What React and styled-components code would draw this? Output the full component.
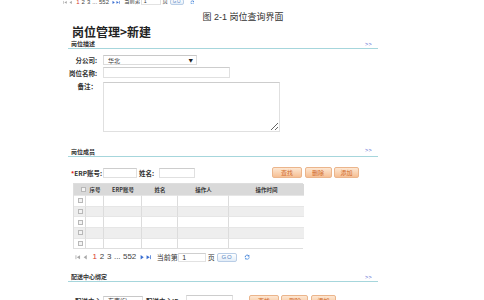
import React from 'react';
import styled, { createGlobalStyle } from 'styled-components';

const GlobalStyle = createGlobalStyle`
  html, body { margin: 0; padding: 0; background: #fff; }
  body {
    font-family: "Liberation Sans", "Noto Sans CJK SC", sans-serif;
    color: #333;
    width: 484px;
    height: 300px;
    overflow: hidden;
  }
  * { box-sizing: border-box; }
`;

const Page = styled.div`
  display: flex;
  flex-direction: column;
  width: 484px;
`;

/* ---------- pager ---------- */
const PagerBar = styled.div`
  display: flex;
  align-items: center;
  height: ${p => p.$h}px;
  font-size: ${p => p.$fs}px;
  margin-left: ${p => p.$ml}px;
  margin-top: ${p => p.$mt || 0}px;
  color: #444;
  white-space: nowrap;
  line-height: 1;
`;
const NavIcon = styled.svg`
  width: ${p => p.$w}em;
  height: 0.8em;
  margin-left: ${p => p.$ml || 0}em;
  fill: ${p => p.$c};
  flex: none;
`;
const PageNum = styled.span`
  margin-left: ${p => p.$ml}em;
  color: ${p => (p.$active ? '#d83a2e' : '#444')};
`;
const PagerText = styled.span`
  font-size: 0.875em;
  margin-left: ${p => p.$ml}em;
  color: #333;
`;
const PageInput = styled.span`
  display: inline-flex;
  align-items: center;
  width: 3.9em;
  height: 1.2em;
  margin-left: 0.1em;
  padding-left: 0.4em;
  border: 1px solid #e2e2e2;
  border-top-color: #cfcfcf;
  font-size: 0.875em;
  color: #333;
`;
const GoButton = styled.span`
  display: inline-flex;
  align-items: center;
  justify-content: center;
  width: 3.3em;
  height: 1.4em;
  margin-left: 0.4em;
  border: 1px solid #b9cde6;
  border-radius: 2px;
  background: linear-gradient(#ffffff, #e3edf8);
  color: #5a86c2;
  font-size: 0.75em;
  letter-spacing: 0.15em;
`;
const RefreshIcon = styled.svg`
  width: 0.8em;
  height: 0.8em;
  margin-left: 0.85em;
  flex: none;
`;

const Pager = ({ fs, h, ml, mt }) => (
  <PagerBar $fs={fs} $h={h} $ml={ml} $mt={mt}>
    <NavIcon $c="#a8a8a8" $w={0.7} viewBox="0 0 10 10">
      <rect x="1" y="1.5" width="1.4" height="7" />
      <path d="M9 1.5 L3.2 5 L9 8.5Z" />
    </NavIcon>
    <NavIcon $c="#a8a8a8" $w={0.55} $ml={0.3} viewBox="0 0 7 10">
      <path d="M6 1.5 L1 5 L6 8.5Z" />
    </NavIcon>
    <PageNum $active $ml={0.65}>1</PageNum>
    <PageNum $ml={0.35}>2</PageNum>
    <PageNum $ml={0.35}>3</PageNum>
    <PageNum $ml={0.3}>...</PageNum>
    <PageNum $ml={0.3}>552</PageNum>
    <NavIcon $c="#3b6fd1" $w={0.55} $ml={0.45} viewBox="0 0 7 10">
      <path d="M1 1.5 L6 5 L1 8.5Z" />
    </NavIcon>
    <NavIcon $c="#3b6fd1" $w={0.7} $ml={0.15} viewBox="0 0 10 10">
      <path d="M1 1.5 L6.8 5 L1 8.5Z" />
      <rect x="7.6" y="1.5" width="1.4" height="7" />
    </NavIcon>
    <PagerText $ml={0.8}>当前第</PagerText>
    <PageInput>1</PageInput>
    <PagerText $ml={0.3}>页</PagerText>
    <GoButton>GO</GoButton>
    <RefreshIcon viewBox="0 0 12 12">
      <path d="M2.2 6 A3.8 3.8 0 0 1 9 3.6" fill="none" stroke="#3f7fd6" strokeWidth="1.8" />
      <path d="M9.8 1.2 L10.2 5 L6.6 4.2Z" fill="#3f7fd6" />
      <path d="M9.8 6 A3.8 3.8 0 0 1 3 8.4" fill="none" stroke="#6aa3e8" strokeWidth="1.8" />
      <path d="M2.2 10.8 L1.8 7 L5.4 7.8Z" fill="#6aa3e8" />
    </RefreshIcon>
  </PagerBar>
);

/* ---------- document ---------- */
const Caption = styled.div`
  margin-top: 6px;
  height: 10px;
  line-height: 10px;
  font-size: 9px;
  text-align: center;
  color: #333;
  padding-left: 2px;
`;

const Doc = styled.div`
  display: flex;
  flex-direction: column;
  margin-left: 68px;
  width: 310px;
`;

const Title = styled.h1`
  margin: 3px 0 0 4px;
  height: 14px;
  line-height: 14px;
  font-size: 12px;
  font-weight: bold;
  color: #222;
  font-family: "Noto Sans CJK SC", "Liberation Sans", sans-serif;
  overflow: visible;
`;

const SectionHead = styled.div`
  display: flex;
  align-items: center;
  justify-content: space-between;
  margin-top: ${p => p.$mt}px;
  height: 10px;
  padding: 0 6px 0 3px;
  border-bottom: 1px solid #a6d6dc;
`;
const SectionTitle = styled.span`
  font-size: 6px;
  line-height: 8px;
  font-weight: bold;
  color: #333;
  font-family: "Noto Sans CJK SC", sans-serif;
`;
const More = styled.span`
  font-size: 5.5px;
  color: #4b5bd0;
  letter-spacing: 0.3px;
  margin-top: ${p => p.$dy || 0}px;
`;

const Form = styled.div`
  display: grid;
  grid-template-columns: 29px 1fr;
  column-gap: 6px;
  row-gap: ${p => p.$gap}px;
  margin-top: 6px;
  align-items: center;
`;
const Label = styled.label`
  justify-self: end;
  align-self: ${p => (p.$top ? 'start' : 'center')};
  margin-top: ${p => (p.$top ? 1 : 0)}px;
  white-space: nowrap;
  font-size: 6.5px;
  font-weight: bold;
  color: #333;
  font-family: "Noto Sans CJK SC", sans-serif;
`;
const SelectBox = styled.div`
  display: flex;
  align-items: center;
  justify-content: space-between;
  width: ${p => p.$w}px;
  height: ${p => p.$h}px;
  padding: 0 3px 0 4px;
  border: 1px solid #dcdcdc;
  border-top-color: #c8c8c8;
  background: #fff;
  font-size: 6px;
  color: #333;
  white-space: nowrap;
  flex: none;
  font-family: "Noto Sans CJK SC", sans-serif;
`;
const Caret = styled.span`
  font-size: 4.5px;
  color: #222;
`;
const TextBox = styled.div`
  width: ${p => p.$w}px;
  height: ${p => p.$h}px;
  border: 1px solid #e0e0e0;
  border-top-color: #cdcdcd;
  background: #fff;
  flex: none;
`;
const AreaBox = styled.textarea`
  display: block;
  width: ${p => p.$w}px;
  height: ${p => p.$h}px;
  margin: 2px 0 0;
  border: 1px solid #e0e0e0;
  border-top-color: #cdcdcd;
  background: #fff;
  resize: both;
  font-size: 7px;
`;

const FilterRow = styled.div`
  display: flex;
  align-items: center;
  margin-top: ${p => p.$mt}px;
  padding-left: ${p => p.$pl}px;
  height: 13px;
`;
const InlineLabel = styled.span`
  flex: none;
  width: ${p => (p.$w ? `${p.$w}px` : 'auto')};
  margin-left: ${p => p.$ml || 0}px;
  margin-right: ${p => p.$mr || 0}px;
  font-size: 6.5px;
  font-weight: bold;
  color: #333;
  white-space: nowrap;
  font-family: "Noto Sans CJK SC", sans-serif;
`;
const Star = styled.span`
  color: #e02020;
`;
const ButtonGroup = styled.div`
  display: flex;
  gap: 2.5px;
  margin-left: ${p => p.$ml}px;
`;
const OrangeButton = styled.span`
  display: inline-flex;
  align-items: center;
  justify-content: center;
  width: ${p => p.$w}px;
  height: 11px;
  border: 1px solid #ebb58c;
  border-radius: 2px;
  background: linear-gradient(#fde7d2, #f6bf94);
  color: #d0692a;
  font-size: 6px;
  font-family: "Noto Sans CJK SC", sans-serif;
`;

/* ---------- table ---------- */
const Table = styled.div`
  display: grid;
  grid-template-columns: 12px 18px 38px 36px 51px 75px;
  grid-template-rows: 11px repeat(5, 10.7px);
  width: 230px;
  margin: 4px 0 0 5px;
  border: 1px solid #dedede;
`;
const Th = styled.div`
  display: flex;
  align-items: center;
  justify-content: ${p => p.$align || 'center'};
  background: #d9d9d9;
  font-size: 5.5px;
  font-weight: bold;
  color: #3a3a3a;
  font-family: "Noto Sans CJK SC", sans-serif;
`;
const Td = styled.div`
  display: flex;
  align-items: center;
  justify-content: center;
  background: ${p => (p.$odd ? '#eeeeee' : '#ffffff')};
  border-right: ${p => (p.$last ? 'none' : '1px solid #dcdcdc')};
  border-top: 1px solid #e6e6e6;
`;
const Check = styled.span`
  display: inline-block;
  width: 5px;
  height: 5px;
  border: 1px solid #b8b8b8;
  background: #f3f3f3;
  margin-left: ${p => p.$ml || 0}px;
`;

const columns = ['序号', 'ERP账号', '姓名', '操作人', '操作时间'];

const MemberTable = () => (
  <Table>
    <Th $align="flex-end"><Check /></Th>
    {columns.map(c => (
      <Th key={c}>{c}</Th>
    ))}
    {[0, 1, 2, 3, 4].map(r =>
      [0, 1, 2, 3, 4, 5].map(c => (
        <Td key={`${r}-${c}`} $odd={r % 2 === 1} $last={c === 5}>
          {c === 0 ? <Check $ml={2} /> : null}
        </Td>
      ))
    )}
  </Table>
);

export default function App() {
  return (
    <>
      <GlobalStyle />
      <Page>
        <Pager fs={6} h={8} ml={63} mt={-2} />
        <Caption>图 2-1 岗位查询界面</Caption>
        <Doc>
          <Title>岗位管理&gt;新建</Title>
          <SectionHead $mt={0}>
            <SectionTitle>岗位描述</SectionTitle>
            <More>&gt;&gt;</More>
          </SectionHead>
          <Form $gap={2}>
            <Label>分公司:</Label>
            <SelectBox $w={94} $h={10}>
              <span>华北</span>
              <Caret>▼</Caret>
            </SelectBox>
            <Label>岗位名称:</Label>
            <TextBox $w={127} $h={11} />
            <Label $top>备注：</Label>
            <AreaBox $w={177} $h={50} />
          </Form>

          <SectionHead $mt={15}>
            <SectionTitle>岗位成员</SectionTitle>
            <More $dy={-3}>&gt;&gt;</More>
          </SectionHead>
          <FilterRow $mt={9} $pl={3}>
            <InlineLabel $w={32}><Star>*</Star>ERP账号:</InlineLabel>
            <TextBox $w={34} $h={10} />
            <InlineLabel $ml={2} $mr={5}>姓名:</InlineLabel>
            <TextBox $w={36} $h={10} />
            <ButtonGroup $ml={77}>
              <OrangeButton $w={30}>查找</OrangeButton>
              <OrangeButton $w={27}>删除</OrangeButton>
              <OrangeButton $w={25}>添加</OrangeButton>
            </ButtonGroup>
          </FilterRow>
          <MemberTable />
        </Doc>
        <Pager fs={8} h={10} ml={75} mt={3} />
        <Doc>
          <SectionHead $mt={10}>
            <SectionTitle>配送中心绑定</SectionTitle>
            <More>&gt;&gt;</More>
          </SectionHead>
          <FilterRow $mt={12} $pl={7}>
            <InlineLabel $w={28}>配送中心</InlineLabel>
            <SelectBox $w={40} $h={10}>
              <span>东南(6)</span>
              <Caret>▼</Caret>
            </SelectBox>
            <InlineLabel $ml={3} $mr={5}>配送中心ID:</InlineLabel>
            <TextBox $w={47} $h={11} />
            <ButtonGroup $ml={16}>
              <OrangeButton $w={30}>查找</OrangeButton>
              <OrangeButton $w={27}>删除</OrangeButton>
              <OrangeButton $w={25}>添加</OrangeButton>
            </ButtonGroup>
          </FilterRow>
        </Doc>
      </Page>
    </>
  );
}
